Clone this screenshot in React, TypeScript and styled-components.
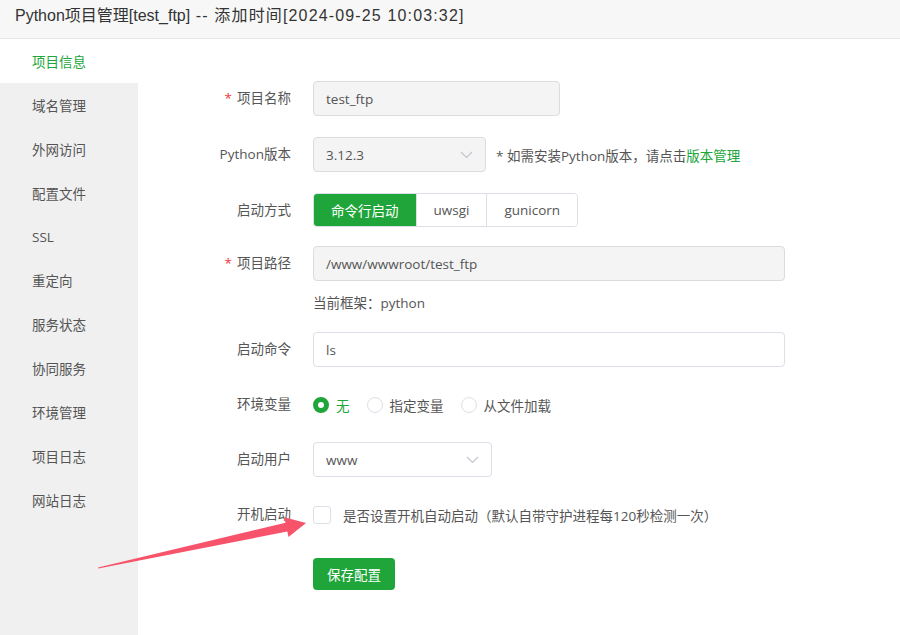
import React from "react";
import styled, { createGlobalStyle } from "styled-components";

const GREEN = "#20a53a";
const FONT = `"Open Sans", "Noto Sans CJK SC", sans-serif`;
const TITLE_FONT = `"Liberation Sans", Arial, "Noto Sans CJK SC", sans-serif`;

const GlobalStyle = createGlobalStyle`
  * { box-sizing: border-box; }
  html, body { margin: 0; padding: 0; background: #fff; }
  body { font-family: ${FONT}; font-size: 13.5px; color: #555; }
`;

const Page = styled.div`
  position: relative;
  width: 900px;
  height: 635px;
  overflow: hidden;
  display: flex;
  flex-direction: column;
  background: #fff;
`;

const Header = styled.div`
  height: 39px;
  flex-shrink: 0;
  padding: 0 15px;
  background: #f7f7f7;
  border-bottom: 1px solid #e6e6e6;
  font-family: ${TITLE_FONT};
  font-size: 16px;
  line-height: 32px;
  color: #333;
  white-space: nowrap;
`;

const TitleTime = styled.span`
  letter-spacing: 1.15px;
`;

const Body = styled.div`
  flex: 1;
  display: flex;
  min-height: 0;
`;

const Sidebar = styled.nav`
  width: 138px;
  flex-shrink: 0;
  background: #f0f0f0;
  display: flex;
  flex-direction: column;
`;

const NavItem = styled.div<{ $active?: boolean }>`
  height: 43.9px;
  padding-left: 32px;
  display: flex;
  align-items: center;
  font-size: 13.5px;
  color: ${(p) => (p.$active ? GREEN : "#555")};
  background: ${(p) => (p.$active ? "#fff" : "transparent")};
`;

const Content = styled.div`
  flex: 1;
  padding: 42px 0 0 23px;
`;

const Row = styled.div<{ $mb?: number }>`
  display: flex;
  align-items: flex-start;
  margin-bottom: ${(p) => p.$mb ?? 21}px;
`;

const Label = styled.div`
  width: 130px;
  flex-shrink: 0;
  margin-right: 22px;
  text-align: right;
  line-height: 35px;
  font-size: 13.5px;
  color: #555;
  white-space: nowrap;
`;

const Req = styled.span`
  color: #f0353b;
  margin-right: 5px;
`;

const Field = styled.div`
  display: flex;
  flex-direction: column;
`;

const Inline = styled.div`
  display: flex;
  align-items: center;
  min-height: 35px;
`;

const Input = styled.div<{ $w: number; $disabled?: boolean }>`
  width: ${(p) => p.$w}px;
  height: 35px;
  padding: 0 12px;
  border: 1px solid ${(p) => (p.$disabled ? "#dcdcdc" : "#dcdfe6")};
  border-radius: 4px;
  background: ${(p) => (p.$disabled ? "#f4f4f4" : "#fff")};
  display: flex;
  align-items: center;
  justify-content: space-between;
  font-size: 13.5px;
  color: #555;
`;

const Chevron = () => (
  <svg width="13" height="8" viewBox="0 0 13 8" fill="none">
    <polyline points="1,1 6.5,6.5 12,1" stroke="#c0c4cc" strokeWidth="1.1" />
  </svg>
);

const Hint = styled.span`
  margin-left: 10px;
  font-size: 13.5px;
  color: #555;
`;

const Link = styled.span`
  color: ${GREEN};
`;

const BtnGroup = styled.div`
  display: flex;
  height: 34px;
  border: 1px solid #dcdfe6;
  border-radius: 4px;
  overflow: hidden;
`;

const SegBtn = styled.div<{ $active?: boolean }>`
  padding: 0 17px;
  display: flex;
  align-items: center;
  font-size: 13.5px;
  color: ${(p) => (p.$active ? "#fff" : "#555")};
  background: ${(p) => (p.$active ? GREEN : "#fff")};
  & + & {
    border-left: 1px solid #dcdfe6;
  }
`;

const SubText = styled.div`
  margin-top: 12px;
  line-height: 20px;
  font-size: 13.5px;
  color: #555;
`;

const RadioGroup = styled.div`
  display: flex;
  align-items: center;
  height: 35px;
  gap: 17px;
`;

const RadioItem = styled.label<{ $checked?: boolean }>`
  display: flex;
  align-items: center;
  gap: 7px;
  font-size: 13.5px;
  color: ${(p) => (p.$checked ? GREEN : "#555")};
`;

const RadioDot = styled.span<{ $checked?: boolean }>`
  width: 16px;
  height: 16px;
  border-radius: 50%;
  border: ${(p) => (p.$checked ? `5px solid ${GREEN}` : "1px solid #dcdfe6")};
  background: #fff;
`;

const CheckRow = styled.div`
  display: flex;
  align-items: center;
  height: 35px;
  gap: 12px;
  font-size: 13.5px;
  color: #555;
`;

const CheckBox = styled.span`
  width: 18px;
  height: 18px;
  border: 1px solid #dcdfe6;
  border-radius: 3px;
  background: #fff;
`;

const SaveBtn = styled.button`
  height: 32px;
  padding: 0 14px;
  border: none;
  border-radius: 4px;
  background: ${GREEN};
  color: #fff;
  font-family: ${FONT};
  font-size: 13.5px;
  cursor: pointer;
`;

const ArrowOverlay = styled.svg`
  position: absolute;
  left: 0;
  top: 0;
  pointer-events: none;
`;

const navItems = [
  "项目信息",
  "域名管理",
  "外网访问",
  "配置文件",
  "SSL",
  "重定向",
  "服务状态",
  "协同服务",
  "环境管理",
  "项目日志",
  "网站日志",
];

export default function App() {
  return (
    <>
      <GlobalStyle />
      <Page>
        <Header>
          Python项目管理[test_ftp]<TitleTime> -- 添加时间[2024-09-25 10:03:32]</TitleTime>
        </Header>
        <Body>
          <Sidebar>
            {navItems.map((n, i) => (
              <NavItem key={n} $active={i === 0}>
                {n}
              </NavItem>
            ))}
          </Sidebar>
          <Content>
            <Row>
              <Label>
                <Req>*</Req>项目名称
              </Label>
              <Input $w={247} $disabled>
                test_ftp
              </Input>
            </Row>
            <Row>
              <Label>Python版本</Label>
              <Inline>
                <Input $w={173} $disabled>
                  3.12.3
                  <Chevron />
                </Input>
                <Hint>
                  * 如需安装Python版本，请点击<Link>版本管理</Link>
                </Hint>
              </Inline>
            </Row>
            <Row $mb={18}>
              <Label>启动方式</Label>
              <BtnGroup>
                <SegBtn $active>命令行启动</SegBtn>
                <SegBtn>uwsgi</SegBtn>
                <SegBtn>gunicorn</SegBtn>
              </BtnGroup>
            </Row>
            <Row $mb={19}>
              <Label>
                <Req>*</Req>项目路径
              </Label>
              <Field>
                <Input $w={472} $disabled>
                  /www/wwwroot/test_ftp
                </Input>
                <SubText>当前框架：python</SubText>
              </Field>
            </Row>
            <Row $mb={20}>
              <Label>启动命令</Label>
              <Input $w={472}>ls</Input>
            </Row>
            <Row $mb={20}>
              <Label>环境变量</Label>
              <RadioGroup>
                <RadioItem $checked>
                  <RadioDot $checked />无
                </RadioItem>
                <RadioItem>
                  <RadioDot />指定变量
                </RadioItem>
                <RadioItem>
                  <RadioDot />从文件加载
                </RadioItem>
              </RadioGroup>
            </Row>
            <Row $mb={20}>
              <Label>启动用户</Label>
              <Input $w={179}>
                www
                <Chevron />
              </Input>
            </Row>
            <Row $mb={26}>
              <Label>开机启动</Label>
              <CheckRow>
                <CheckBox />
                是否设置开机自动启动（默认自带守护进程每120秒检测一次）
              </CheckRow>
            </Row>
            <Row>
              <Label />
              <SaveBtn>保存配置</SaveBtn>
            </Row>
          </Content>
        </Body>
        <ArrowOverlay width="900" height="635" viewBox="0 0 900 635">
          <polygon
            points="98,567.5 285.5,522.7 284.3,517.3 306,523 288.5,536.9 287.3,531.5 98.3,568.5"
            fill="#f7536b"
          />
        </ArrowOverlay>
      </Page>
    </>
  );
}
